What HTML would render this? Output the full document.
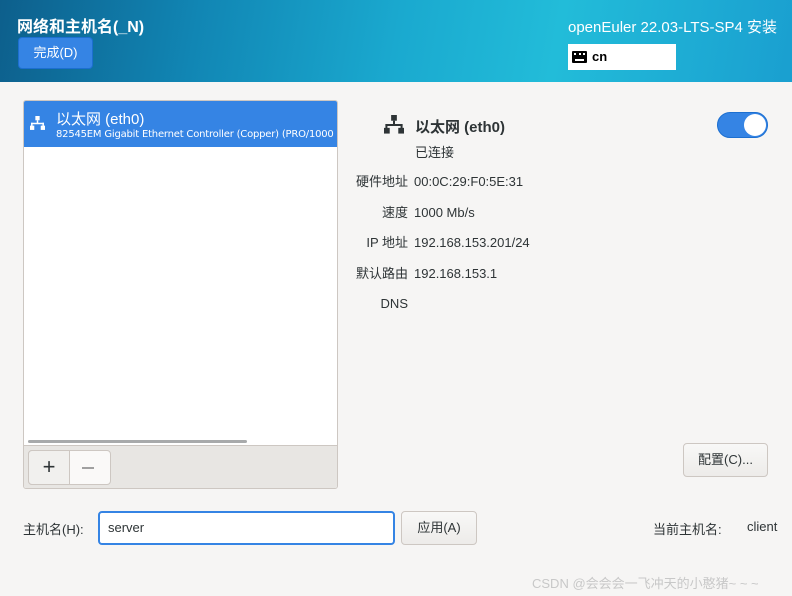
<!DOCTYPE html>
<html><head><meta charset="utf-8"><style>
*{box-sizing:border-box;margin:0;padding:0}
body{width:792px;height:596px;overflow:hidden;background:#f6f5f4;font-family:"Liberation Sans","Noto Sans CJK SC",sans-serif;color:#2e3436;position:relative;font-size:13px}
.hdr{position:absolute;left:0;top:0;width:792px;height:82px;background:linear-gradient(100deg,#0d5f8c 0%,#1186b4 25%,#1aa9cf 50%,#22bcd9 70%,#1a9fd0 100%)}
.abs{position:absolute}
.btn{position:absolute;border:1px solid #cdc7c2;border-radius:4px;background:linear-gradient(#f8f8f7,#edebe9);text-align:center;font-size:13px;color:#2e3436}
</style></head><body>
<div class="hdr">
 <div class="abs" style="left:17px;top:13px;color:#fff;font-weight:bold;font-size:16px">网络和主机名(_N)</div>
 <div class="abs" style="left:18px;top:37px;width:75px;height:32px;background:#3584e4;border:1px solid #1c6fd0;border-radius:4px;color:#fff;text-align:center;line-height:30px;font-size:13px">完成(D)</div>
 <div class="abs" style="left:568px;top:16px;color:#fff;font-size:15px;white-space:nowrap">openEuler 22.03-LTS-SP4 安装</div>
 <div class="abs" style="left:568px;top:44px;width:108px;height:26px;background:#fff">
  <div class="abs" style="left:4px;top:7px;width:15px;height:12px;background:#000;border-radius:1px"><div style="position:absolute;left:2px;top:2px;width:11px;height:5px;border-top:2px dotted #fff"></div><div style="position:absolute;left:3px;top:8px;width:9px;height:1.5px;background:#fff"></div></div>
  <div class="abs" style="left:24px;top:5px;font-weight:bold;font-size:13px;color:#000">cn</div>
 </div>
</div>
<div class="abs" style="left:23px;top:100px;width:315px;height:389px;border:1px solid #cdc7c2;border-radius:3px;background:#fff;overflow:hidden">
 <div class="abs" style="left:0;top:0;width:315px;height:46px;background:#3584e4;color:#fff">
  <svg class="abs" style="left:6px;top:15px" width="15" height="15" viewBox="0 0 14 14" fill="#fff"><rect x="5" y="0" width="4" height="4"/><rect x="6.3" y="4" width="1.4" height="3"/><rect x="1" y="6.3" width="12" height="1.4"/><rect x="1" y="6.3" width="1.4" height="3"/><rect x="11.6" y="6.3" width="1.4" height="3"/><rect x="0" y="9" width="4" height="4"/><rect x="10" y="9" width="4" height="4"/></svg>
  <div class="abs" style="left:32px;top:7px;font-size:15px">以太网 (eth0)</div>
  <div class="abs" style="left:32px;top:28px;font-size:10px;white-space:nowrap;font-family:'DejaVu Sans',sans-serif;letter-spacing:-0.2px">82545EM Gigabit Ethernet Controller (Copper) (PRO/1000</div>
 </div>
 <div class="abs" style="left:4px;top:339px;width:219px;height:3px;background:#a8aaab;border-radius:2px"></div>
 <div class="abs" style="left:0;top:344px;width:315px;height:45px;background:#e8e6e3;border-top:1px solid #cdc7c2"></div>
 <div class="abs" style="left:4px;top:349px;width:83px;height:35px;border:1px solid #cdc7c2;border-radius:4px;background:#faf9f8"></div>
 <div class="abs" style="left:4px;top:349px;width:42px;height:35px;border:1px solid #cdc7c2;border-radius:4px 0 0 4px;background:#f1f0ee;font-size:22px;text-align:center;line-height:32px;color:#2e3436">+</div>
 <div class="abs" style="left:58px;top:366px;width:12px;height:1.5px;background:#a0a0a0"></div>
</div>
<svg class="abs" style="left:384px;top:115px" width="20" height="20" viewBox="0 0 14 14" fill="#2e3436"><rect x="5" y="0" width="4" height="4"/><rect x="6.3" y="4" width="1.4" height="3"/><rect x="1" y="6.3" width="12" height="1.4"/><rect x="1" y="6.3" width="1.4" height="3"/><rect x="11.6" y="6.3" width="1.4" height="3"/><rect x="0" y="9" width="4" height="4"/><rect x="10" y="9" width="4" height="4"/></svg>
<div class="abs" style="left:415px;top:116px;font-weight:bold;font-size:15px">以太网 (eth0)</div>
<div class="abs" style="left:415px;top:142px">已连接</div>
<div class="abs" style="left:717px;top:112px;width:51px;height:26px;background:#3584e4;border-radius:13px;border:1px solid #1c6fd0"><div style="position:absolute;right:1px;top:1px;width:22px;height:22px;border-radius:50%;background:#fff"></div></div>
<div class="abs" style="left:340px;top:167px;width:68px;text-align:right;line-height:30.5px">硬件地址<br>速度<br>IP 地址<br>默认路由<br>DNS</div>
<div class="abs" style="left:414px;top:167px;line-height:30.5px">00:0C:29:F0:5E:31<br>1000 Mb/s<br>192.168.153.201/24<br>192.168.153.1</div>
<div class="btn" style="left:683px;top:443px;width:85px;height:34px;line-height:32px">配置(C)...</div>
<div class="abs" style="left:23px;top:519px">主机名(H):</div>
<div class="abs" style="left:98px;top:511px;width:297px;height:34px;border:2px solid #3584e4;border-radius:4px;background:#fff;padding-left:8px;line-height:30px;font-size:13px">server</div>
<div class="btn" style="left:401px;top:511px;width:76px;height:34px;line-height:32px">应用(A)</div>
<div class="abs" style="left:653px;top:519px">当前主机名:</div>
<div class="abs" style="left:747px;top:519px">client</div>
<div class="abs" style="left:532px;top:573px;color:#c8c8c8;font-size:13px;white-space:nowrap">CSDN @会会会一飞冲天的小憨猪~ ~ ~</div>
</body></html>
